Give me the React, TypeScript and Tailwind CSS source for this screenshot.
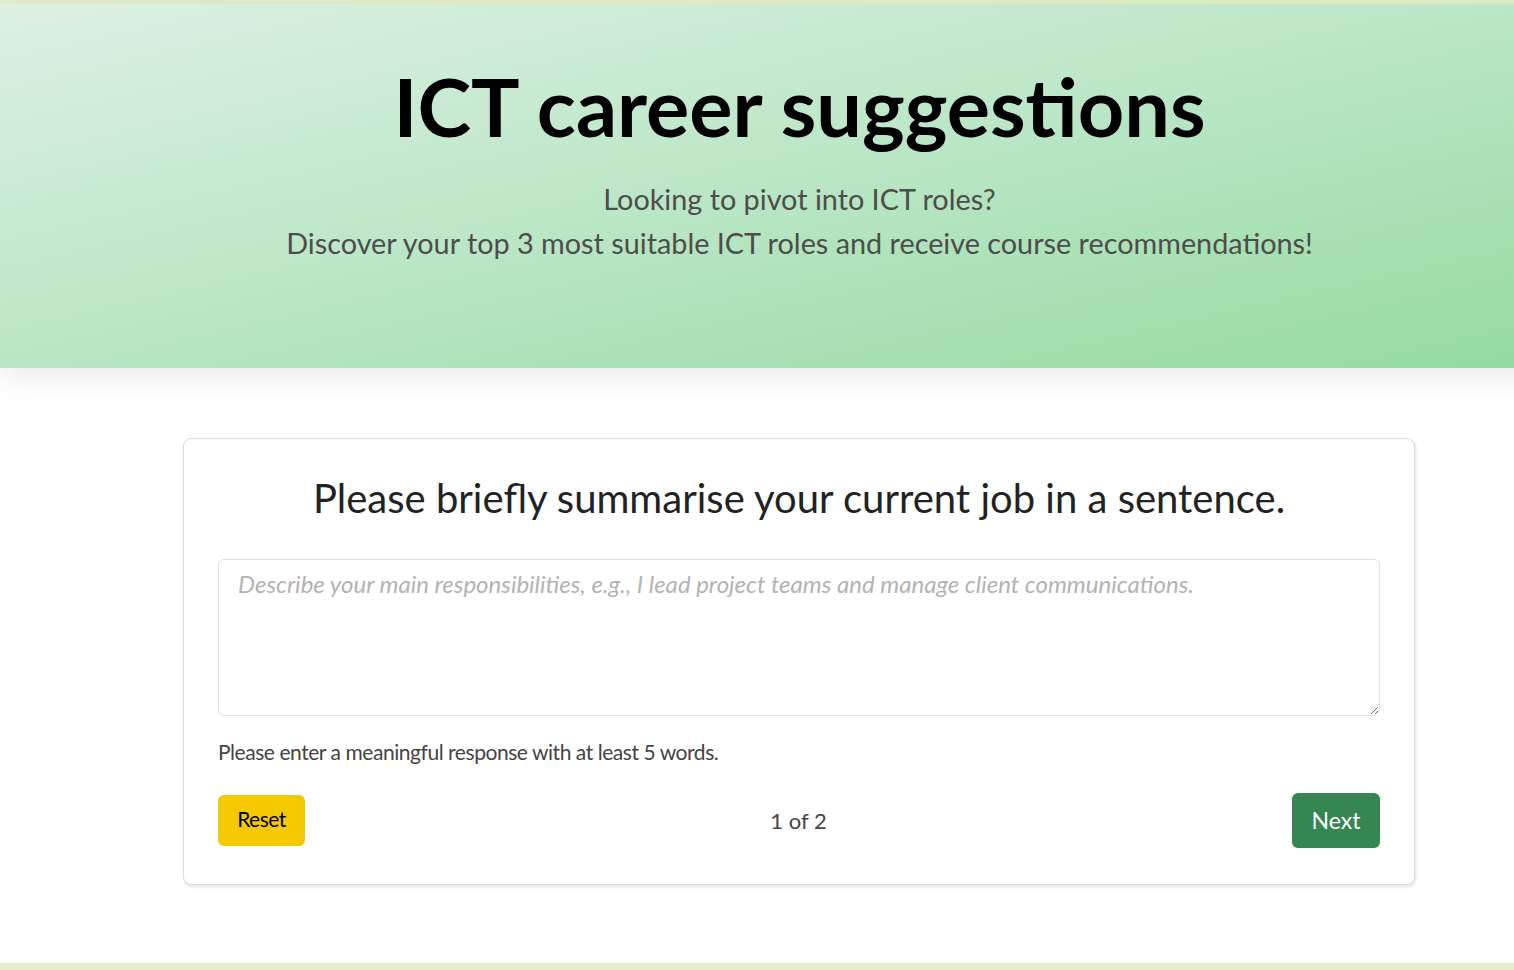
export default function App() {
  return (
    <div
      className="h-[970px] w-full overflow-hidden bg-[#e2efc8] pt-[4px] pb-[7px]"
      style={{ fontFamily: "Lato, 'Open Sans', sans-serif" }}
    >
      <div className="h-full w-[1599px] bg-white">
        {/* Hero */}
        <header className="relative z-10 h-[364px] bg-gradient-to-br from-[#ddf0e3] via-[#b9e6c5] to-[#93da9d] pt-[54px] text-center shadow-[0_8px_30px_rgba(0,0,0,0.09)]">
          <h1 className="text-[81px] font-bold leading-[96px] text-black">
            ICT career suggestions
          </h1>
          <p className="mt-[23px] text-[28.8px] leading-[44px] text-[#4d4d4d]">
            Looking to pivot into ICT roles?
            <br />
            Discover your top 3 most suitable ICT roles and receive course recommendations!
          </p>
        </header>

        {/* Question card */}
        <div className="pl-[183px] pr-[184px] pt-[70px]">
          <div className="rounded-lg border border-[#dcdcdc] bg-white px-[34px] pt-[35px] pb-[36px] shadow-[1px_2px_3px_rgba(0,0,0,0.1)]">
            <h2 className="text-center text-[40px] leading-[48px] text-[#222]">
              Please briefly summarise your current job in a sentence.
            </h2>
            <textarea
              className="mt-[37px] block h-[157px] w-full resize-y rounded-md border border-[#dedede] px-[19px] pt-[6px] text-[24px] leading-[36px] italic text-[#333] outline-none placeholder:text-[#b3b3b3]"
              placeholder="Describe your main responsibilities, e.g., I lead project teams and manage client communications."
            />
            <p className="mt-[20px] text-[21px] leading-[32px] tracking-[-0.45px] text-[#444]">
              Please enter a meaningful response with at least 5 words.
            </p>
            <div className="mt-[25px] flex items-center justify-between">
              <button className="h-[51px] w-[87px] rounded-md bg-[#f5c900] pb-[4px] text-[21px] tracking-[-0.5px] text-black">
                Reset
              </button>
              <span className="text-[22px] text-[#444]">1 of 2</span>
              <button className="h-[55px] w-[88px] rounded-md bg-[#358651] text-[23px] text-white">
                Next
              </button>
            </div>
          </div>
        </div>
      </div>
    </div>
  );
}
